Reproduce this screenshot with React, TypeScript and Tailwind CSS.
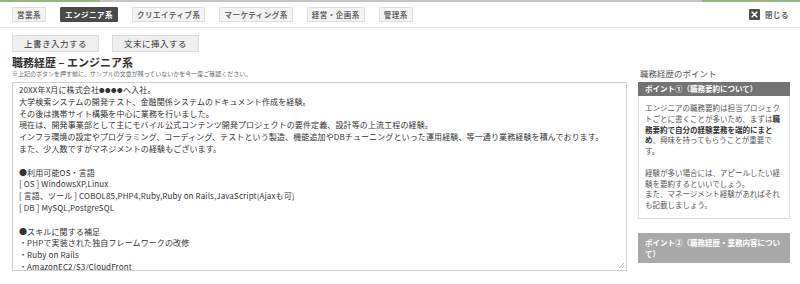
import React from "react";

const tabs = ["営業系", "エンジニア系", "クリエイティブ系", "マーケティング系", "経営・企画系", "管理系"];

const careerLines: React.ReactNode[] = [
  <>
    20XX年X月に株式会社<span className="text-[5.5px] tracking-[0.5px]">●●●●</span>へ入社。
  </>,
  "大学検索システムの開発テスト、金融関係システムのドキュメント作成を経験。",
  "その後は携帯サイト構築を中心に業務を行いました。",
  "現在は、開発事業部として主にモバイル公式コンテンツ開発プロジェクトの要件定義、設計等の上流工程の経験。",
  "インフラ環境の設定やプログラミング、コーディング、テストという製造、機能追加やDBチューニングといった運用経験、等一通り業務経験を積んでおります。",
  "また、少人数ですがマネジメントの経験もございます。",
  "",
  "●利用可能OS・言語",
  "[ OS ] WindowsXP,Linux",
  "[ 言語、ツール ] COBOL85,PHP4,Ruby,Ruby on Rails,JavaScript(Ajaxも可)",
  "[ DB ] MySQL,PostgreSQL",
  "",
  "●スキルに関する補足",
  "・PHPで実装された独自フレームワークの改修",
  "・Ruby on Rails",
  "・AmazonEC2/S3/CloudFront",
];

export default function App() {
  return (
    <div className="w-[800px] h-[284px] bg-white overflow-hidden font-['Noto_Sans_CJK_JP','Noto_Sans',sans-serif] text-[#333]">
      {/* top strip */}
      <div className="flex h-[2px]">
        <div className="w-[100px] bg-[#9db386]" />
        <div className="flex-1 bg-[#c4c4c4]" />
        <div className="w-[98px] bg-[#9db386]" />
      </div>

      {/* tab bar */}
      <div className="flex items-center justify-between h-[26px] pl-[12px] pr-[10px] border-b border-[#e3e3e3]">
        <div className="flex gap-[14px]">
          {tabs.map((t) => {
            const active = t === "エンジニア系";
            return (
              <div
                key={t}
                className={
                  active
                    ? "h-[15px] px-[4px] flex items-center text-[7.5px] tracking-[0.5px] font-bold leading-none bg-[#4a4a4a] border border-[#4a4a4a] text-white rounded-[1px]"
                    : "h-[15px] px-[4px] flex items-center text-[7.5px] tracking-[0.5px] font-bold leading-none bg-[#f3f3f3] border border-[#dedede] text-[#666] rounded-[1px]"
                }
              >
                {t}
              </div>
            );
          })}
        </div>
        <div className="flex items-center gap-[5px] mr-[1px]">
          <div className="w-[11px] h-[11px] bg-[#4d4d4d] rounded-[1px] flex items-center justify-center">
            <svg width="7" height="7" viewBox="0 0 7 7">
              <path d="M1.2 1.2 L5.8 5.8 M5.8 1.2 L1.2 5.8" stroke="#fff" strokeWidth="1.6" strokeLinecap="round" />
            </svg>
          </div>
          <span className="text-[7.5px] font-bold text-[#666] tracking-[0.5px]">閉じる</span>
        </div>
      </div>

      {/* main */}
      <div className="flex gap-[11px] pl-[12px] pr-[10px]">
        {/* left */}
        <div className="w-[615px] flex flex-col pt-[7px]">
          <div className="flex gap-[13px]">
            <div className="w-[87px] h-[17px] flex items-center justify-center bg-[#efefef] border border-[#dcdcdc] text-[8.5px] text-[#333] tracking-[0.5px]">
              上書き入力する
            </div>
            <div className="w-[87px] h-[17px] flex items-center justify-center bg-[#efefef] border border-[#dcdcdc] text-[8.5px] text-[#333] tracking-[0.5px]">
              文末に挿入する
            </div>
          </div>
          <div className="mt-[3px] h-[14px] leading-[14px] text-[11px] font-bold text-[#333] whitespace-pre">
            職務経歴 – エンジニア系
          </div>
          <div className="h-[9px] leading-[9px] text-[6px] text-[#666] whitespace-nowrap">
            ※上記のボタンを押す前に、サンプルの文章が残っていないかを今一度ご確認ください。
          </div>
          <div className="relative mt-[4px] h-[189px] border border-[#d0d0d0] overflow-hidden pl-[6px] pt-[1px]">
            {careerLines.map((l, i) => (
              <div key={i} className="h-[11.8px] leading-[11.8px] text-[8px] tracking-[0.12px] text-[#333] whitespace-nowrap">
                {l}
              </div>
            ))}
            <svg className="absolute right-[1px] bottom-[1px]" width="7" height="7" viewBox="0 0 7 7">
              <path d="M6 1 L1 6 M6 4 L4 6" stroke="#aaa" strokeWidth="0.8" />
            </svg>
          </div>
        </div>

        {/* right */}
        <div className="w-[152px] flex flex-col pt-[39px]">
          <div className="h-[12px] leading-[12px] text-[8.5px] text-[#555] pl-[2px] mb-[3px]">職務経歴のポイント</div>
          <div className="h-[14px] leading-[14px] bg-[#737373] text-white text-[7.5px] font-bold px-[7px] whitespace-nowrap">
            ポイント①（職務要約について）
          </div>
          <div className="border border-t-0 border-[#dddddd] px-[6px] py-[7px] text-[7.5px] leading-[10.8px] text-[#555] whitespace-nowrap">
            <div>エンジニアの職務要約は担当プロジェク</div>
            <div>
              トごとに書くことが多いため、まずは<b className="text-[#333]">職</b>
            </div>
            <div>
              <b className="text-[#333]">務要約で自分の経験業務を端的にまと</b>
            </div>
            <div>
              <b className="text-[#333]">め</b>、興味を持ってもらうことが重要で
            </div>
            <div>す。</div>
            <div className="h-[10.8px]" />
            <div>経験が多い場合には、アピールしたい経</div>
            <div>験を要約するといいでしょう。</div>
            <div>また、マネージメント経験があればそれ</div>
            <div>も記載しましょう。</div>
          </div>
          <div className="mt-[14px] bg-[#a9a9a9] px-[7px] py-[4px] text-[7.5px] leading-[11px] font-bold text-white whitespace-nowrap">
            <div>ポイント②（職務経歴・業務内容につい</div>
            <div>て）</div>
          </div>
        </div>
      </div>
    </div>
  );
}
